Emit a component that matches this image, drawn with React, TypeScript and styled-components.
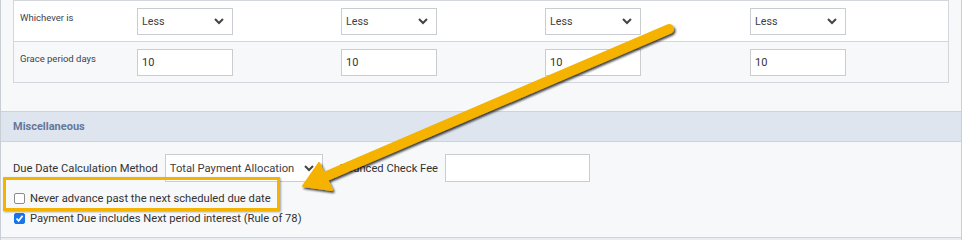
import React from "react";
import styled, { createGlobalStyle } from "styled-components";

const GlobalStyle = createGlobalStyle`
  html, body { margin: 0; padding: 0; background: #f7f8fa; }
  body { font-family: Roboto, "Liberation Sans", sans-serif; color: #333; }
  * { box-sizing: border-box; }
`;

const Page = styled.div`
  position: relative;
  width: 962px;
  height: 240px;
  overflow: hidden;
  background: #f7f8fa;
  border-left: 1px solid #c9cdd4;
  border-right: 1px solid #c9cdd4;
`;

const TableWrap = styled.div`
  padding: 0 12px;
`;

const Table = styled.div`
  border: 1px solid #d3d6dc;
`;

const Row = styled.div<{ $bg: string; $last?: boolean }>`
  display: grid;
  grid-template-columns: 123px 204px 204px 205px 1fr;
  height: ${(p) => (p.$last ? 40 : 41)}px;
  background: ${(p) => p.$bg};
  border-bottom: ${(p) => (p.$last ? "none" : "1px solid #d3d6dc")};
`;

const CellLabel = styled.div`
  padding: 10px 0 0 6px;
  font-size: 9.5px;
  line-height: 13px;
  color: #3b4150;
`;

const Cell = styled.div`
  padding-top: 7px;
`;

const SelectBox = styled.div<{ $w: number; $h: number; $fs: number }>`
  display: flex;
  align-items: center;
  justify-content: space-between;
  width: ${(p) => p.$w}px;
  height: ${(p) => p.$h}px;
  padding: 0 8px 0 4px;
  background: #fff;
  border: 1px solid #c9ccd1;
  font-size: ${(p) => p.$fs}px;
  color: #3d3d3d;
  white-space: nowrap;
`;

const TextInput = styled.input<{ $w: number; $h: number }>`
  display: block;
  width: ${(p) => p.$w}px;
  height: ${(p) => p.$h}px;
  padding: 0 4px;
  margin: 0;
  background: #fff;
  border: 1px solid #c9ccd1;
  font-family: Roboto, "Liberation Sans", sans-serif;
  font-size: 11px;
  color: #333;
  outline: none;
`;

const Spacer = styled.div`
  height: 28px;
`;

const SectionHeader = styled.div`
  height: 31px;
  display: flex;
  align-items: center;
  padding-left: 12px;
  background: #dfe5ee;
  border-top: 1px solid #cdd2db;
  border-bottom: 1px solid #cdd2db;
  font-size: 11px;
  font-weight: 700;
  color: #66779b;
`;

const SectionBody = styled.div`
  height: 95px;
  padding: 12px 12px 0;
`;

const FormRow = styled.div`
  display: flex;
  align-items: center;
  height: 28px;
`;

const FieldLabel = styled.span<{ $ml?: number }>`
  font-size: 11.2px;
  color: #333;
  margin-left: ${(p) => p.$ml ?? 0}px;
  margin-right: 7px;
  white-space: nowrap;
`;

const CheckRow = styled.div<{ $mt?: number }>`
  display: flex;
  align-items: center;
  height: 20px;
  margin-top: ${(p) => p.$mt ?? 0}px;
  font-size: 11.2px;
  color: #333;
`;

const Box = styled.span<{ $checked?: boolean }>`
  display: inline-flex;
  align-items: center;
  justify-content: center;
  width: 11px;
  height: 11px;
  margin: 0 5px 0 1px;
  border-radius: 2px;
  border: 1px solid ${(p) => (p.$checked ? "#1a73e8" : "#8a8a8a")};
  background: ${(p) => (p.$checked ? "#1a73e8" : "#fff")};
`;

const Footer = styled.div`
  height: 4px;
  border-top: 1px solid #cdd2db;
  background: #e9ecf1;
`;

const Highlight = styled.div`
  position: absolute;
  left: 2px;
  top: 177px;
  width: 277px;
  height: 34px;
  border: 3px solid #f5b301;
  box-shadow: 1px 1px 2px rgba(0, 0, 0, 0.35);
  pointer-events: none;
`;

const Overlay = styled.svg`
  position: absolute;
  left: 0;
  top: 0;
  pointer-events: none;
`;

const Chevron = () => (
  <svg width="10" height="7" viewBox="0 0 10 7">
    <polyline points="1,1 5,5 9,1" fill="none" stroke="#444" strokeWidth="2" />
  </svg>
);

const Check = () => (
  <svg width="9" height="9" viewBox="0 0 9 9">
    <polyline points="1.5,4.5 3.6,6.8 7.6,1.8" fill="none" stroke="#fff" strokeWidth="1.8" />
  </svg>
);

const cols = [0, 1, 2, 3];

export default function App() {
  return (
    <>
      <GlobalStyle />
      <Page>
        <TableWrap>
          <Table>
            <Row $bg="#ffffff">
              <CellLabel>Whichever is</CellLabel>
              {cols.map((i) => (
                <Cell key={i}>
                  <SelectBox $w={96} $h={27} $fs={10.7}>
                    <span>Less</span>
                    <Chevron />
                  </SelectBox>
                </Cell>
              ))}
            </Row>
            <Row $bg="#f7f8fa" $last>
              <CellLabel>Grace period days</CellLabel>
              {cols.map((i) => (
                <Cell key={i}>
                  <TextInput $w={96} $h={27} defaultValue="10" readOnly />
                </Cell>
              ))}
            </Row>
          </Table>
        </TableWrap>
        <Spacer />
        <SectionHeader>Miscellaneous</SectionHeader>
        <SectionBody>
          <FormRow>
            <FieldLabel>Due Date Calculation Method</FieldLabel>
            <SelectBox $w={158} $h={28} $fs={11.2}>
              <span>Total Payment Allocation</span>
              <Chevron />
            </SelectBox>
            <FieldLabel $ml={17}>Bounced Check Fee</FieldLabel>
            <TextInput $w={145} $h={28} defaultValue="" readOnly />
          </FormRow>
          <CheckRow $mt={6}>
            <Box />
            Never advance past the next scheduled due date
          </CheckRow>
          <CheckRow>
            <Box $checked>
              <Check />
            </Box>
            Payment Due includes Next period interest (Rule of 78)
          </CheckRow>
        </SectionBody>
        <Footer />
        <Highlight />
        <Overlay width="962" height="240" viewBox="0 0 962 240">
          <defs>
            <filter id="sh" x="-10%" y="-10%" width="130%" height="130%">
              <feDropShadow dx="1.5" dy="2" stdDeviation="1.2" floodColor="#000" floodOpacity="0.75" />
            </filter>
          </defs>
          <g filter="url(#sh)" fill="#f5b301" stroke="#f5b301">
            <line x1="668" y1="29" x2="322" y2="177.5" strokeWidth="10" strokeLinecap="round" />
            <polygon points="302,186 331,190 318,163" strokeWidth="2" strokeLinejoin="round" />
          </g>
        </Overlay>
      </Page>
    </>
  );
}
